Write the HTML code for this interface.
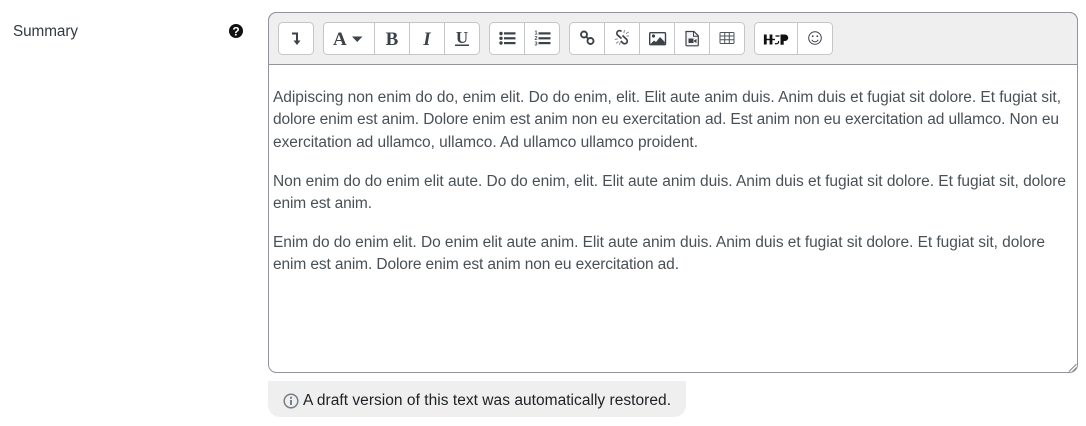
<!DOCTYPE html>
<html><head><meta charset="utf-8"><style>
html,body{margin:0;padding:0;background:#fff;width:1086px;height:426px;overflow:hidden}
svg{display:block}
text{font-family:"Liberation Sans",sans-serif}
.t{font-size:15.5px;fill:#495057}
</style></head><body>
<svg width="1086" height="426" viewBox="0 0 1086 426" xmlns="http://www.w3.org/2000/svg">
<text x="13" y="36" font-size="15.3" fill="#343a40" textLength="65">Summary</text>
<circle cx="236" cy="31" r="7" fill="#111"/>
<text x="236" y="35.500" font-size="12" font-weight="bold" fill="#fff" text-anchor="middle">?</text>

<rect x="268.500" y="12.500" width="809" height="360" rx="8" fill="#fff" stroke="#8f959e"/>
<path d="M269 64V20.500a8 8 0 0 1 8-8h792a8 8 0 0 1 8 8V64z" fill="#efefef"/>
<path d="M268.500 64.500H1077.500M268.500 20.500a8 8 0 0 1 8-8h793a8 8 0 0 1 8 8V64.500M268.500 20.500V64.500" stroke="#8f959e" fill="none"/>
<path d="M1069 371.500l7.500-7.500M1072.500 371.500l4-4" stroke="#888" stroke-width="1"/>

<g fill="#fff" stroke="#c4c6c9">
<rect x="278.500" y="22.500" width="35" height="32" rx="4"/>
<rect x="323.500" y="22.500" width="156" height="32" rx="4"/>
<rect x="489.500" y="22.500" width="70" height="32" rx="4"/>
<rect x="569.500" y="22.500" width="175" height="32" rx="4"/>
<rect x="754.500" y="22.500" width="78" height="32" rx="4"/>
</g>
<path d="M374.500 23V54M409.500 23V54M444.500 23V54M524.500 23V54M604.500 23V54M639.500 23V54M674.500 23V54M709.500 23V54M797.500 23V54" stroke="#c4c6c9"/>

<!-- direction arrow -->
<path d="M292 33.500H297V41" fill="none" stroke="#3c4249" stroke-width="2"/>
<path d="M293.500 40.500H300.500L297 45z" fill="#3c4249"/>
<!-- font -->
<text x="333" y="45" font-size="19" font-weight="bold" fill="#3c4249" style="font-family:'Liberation Serif',serif">A</text>
<path d="M352 36.500H362.500L357.200 42z" fill="#3c4249"/>
<text x="392" y="45" font-size="19" font-weight="bold" fill="#3c4249" text-anchor="middle" style="font-family:'Liberation Serif',serif">B</text>
<text x="427" y="45" font-size="19" font-weight="bold" font-style="italic" fill="#3c4249" text-anchor="middle" style="font-family:'Liberation Serif',serif">I</text>
<text x="462" y="43" font-size="17" font-weight="bold" fill="#3c4249" text-anchor="middle" style="font-family:'Liberation Serif',serif">U</text>
<rect x="455" y="44.500" width="14" height="1.500" fill="#3c4249"/>
<!-- ul -->
<g fill="#3c4249">
<circle cx="501" cy="33.500" r="1.700"/><circle cx="501" cy="38.300" r="1.700"/><circle cx="501" cy="43" r="1.700"/>
<rect x="504" y="32.300" width="11.500" height="2.200"/><rect x="504" y="37.200" width="11.500" height="2.200"/><rect x="504" y="42" width="11.500" height="2.200"/>
<rect x="538.500" y="32.300" width="12" height="2.200"/><rect x="538.500" y="37.200" width="12" height="2.200"/><rect x="538.500" y="42" width="12" height="2.200"/>
</g>
<g font-size="5.500" fill="#3c4249" font-weight="bold" text-anchor="middle"><text x="536" y="34.500">1</text><text x="536" y="40">2</text><text x="536" y="45.500">3</text></g>
<!-- link -->
<g fill="none" stroke="#3c4249" stroke-width="1.900">
<circle cx="584" cy="34.500" r="3"/><circle cx="590.500" cy="41" r="3"/><path d="M586 36.500L588.500 39"/>
</g>
<!-- unlink -->
<path d="M621.500 31.500a2.600 2.600 0 0 0-4 3.500l4 3.500M622.500 35.500l4 3.700a2.600 2.600 0 0 1-3.700 3.800l-2-2" fill="none" stroke="#3c4249" stroke-width="1.700"/>
<path d="M624.500 30l-.6 3M628.800 32l-2.800 1.600M629 36h-2.500M614.800 39.500l3-.6M616 43.500l2.500-2M619.500 45l.7-2.800" stroke="#8a8a8a" stroke-width="1"/>
<!-- image -->
<rect x="649.700" y="32.700" width="15.800" height="12" rx="1" fill="#fff" stroke="#3c4249" stroke-width="1.400"/>
<circle cx="653.500" cy="36" r="1.600" fill="#3c4249"/>
<path d="M650.500 44l3.500-3.500 2 1.500 4-5 4.800 5V44z" fill="#3c4249"/>
<!-- video file -->
<path d="M686 31.500h8l4.300 4.300V45a.8.8 0 0 1-.8.8H686.800a.8.8 0 0 1-.8-.8z" fill="#f4f4f4" stroke="#3c4249" stroke-width="1.200"/>
<path d="M693.500 31.500v4.800h4.800" fill="none" stroke="#3c4249" stroke-width="1"/>
<rect x="688.500" y="38.500" width="5" height="4.500" fill="#3c4249"/><path d="M694 40.500l2.500-1.500v4l-2.500-1.500z" fill="#3c4249"/>
<!-- table -->
<rect x="720" y="32.500" width="14" height="11" rx="1" fill="#fff" stroke="#4e545b" stroke-width="1"/>
<path d="M720 36h14M720 39.700h14M724.700 33v10M729.300 33v10" stroke="#4e545b" stroke-width="1"/>
<!-- H5P -->
<path d="M765.300 34.500V44.500M771 34.500V44.500" stroke="#111" stroke-width="2.800"/>
<path d="M765 39.500H775" stroke="#111" stroke-width="1.400"/>
<path d="M775.500 36H779.500" stroke="#111" stroke-width="1.300"/>
<path d="M775 43.500c2.500.8 4-.5 3.500-2.500" fill="none" stroke="#111" stroke-width="1.200"/>
<path d="M780.500 34.500H785a3.200 3.200 0 0 1 0 6.500H783.700V44.800H780.500z" fill="#111"/>
<!-- smile -->
<circle cx="815" cy="38" r="6.300" fill="none" stroke="#3c4249" stroke-width="1"/>
<circle cx="812.700" cy="36.200" r=".9" fill="#3c4249"/><circle cx="817.300" cy="36.200" r=".9" fill="#3c4249"/>
<path d="M811.800 39.800a3.600 3.600 0 0 0 6.400 0" fill="none" stroke="#3c4249" stroke-width="1"/>

<text class="t" x="273" y="102" textLength="788">Adipiscing non enim do do, enim elit. Do do enim, elit. Elit aute anim duis. Anim duis et fugiat sit dolore. Et fugiat sit,</text>
<text class="t" x="273" y="124" textLength="786">dolore enim est anim. Dolore enim est anim non eu exercitation ad. Est anim non eu exercitation ad ullamco. Non eu</text>
<text class="t" x="273" y="147" textLength="425">exercitation ad ullamco, ullamco. Ad ullamco ullamco proident.</text>
<text class="t" x="273" y="186" textLength="793">Non enim do do enim elit aute. Do do enim, elit. Elit aute anim duis. Anim duis et fugiat sit dolore. Et fugiat sit, dolore</text>
<text class="t" x="273" y="208" textLength="99">enim est anim.</text>
<text class="t" x="273" y="247" textLength="772">Enim do do enim elit. Do enim elit aute anim. Elit aute anim duis. Anim duis et fugiat sit dolore. Et fugiat sit, dolore</text>
<text class="t" x="273" y="269" textLength="406">enim est anim. Dolore enim est anim non eu exercitation ad.</text>

<path d="M268 381H686V405a12 12 0 0 1-12 12H280a12 12 0 0 1-12-12z" fill="#efefef"/>
<circle cx="291" cy="401" r="6.800" fill="none" stroke="#7a8087" stroke-width="1.500"/>
<rect x="290" y="400" width="2" height="5" fill="#7a8087"/><rect x="290" y="396.800" width="2" height="2" fill="#7a8087"/>
<text x="303" y="405" font-size="15.5" fill="#1d2125" textLength="368">A draft version of this text was automatically restored.</text>
</svg>
</body></html>
